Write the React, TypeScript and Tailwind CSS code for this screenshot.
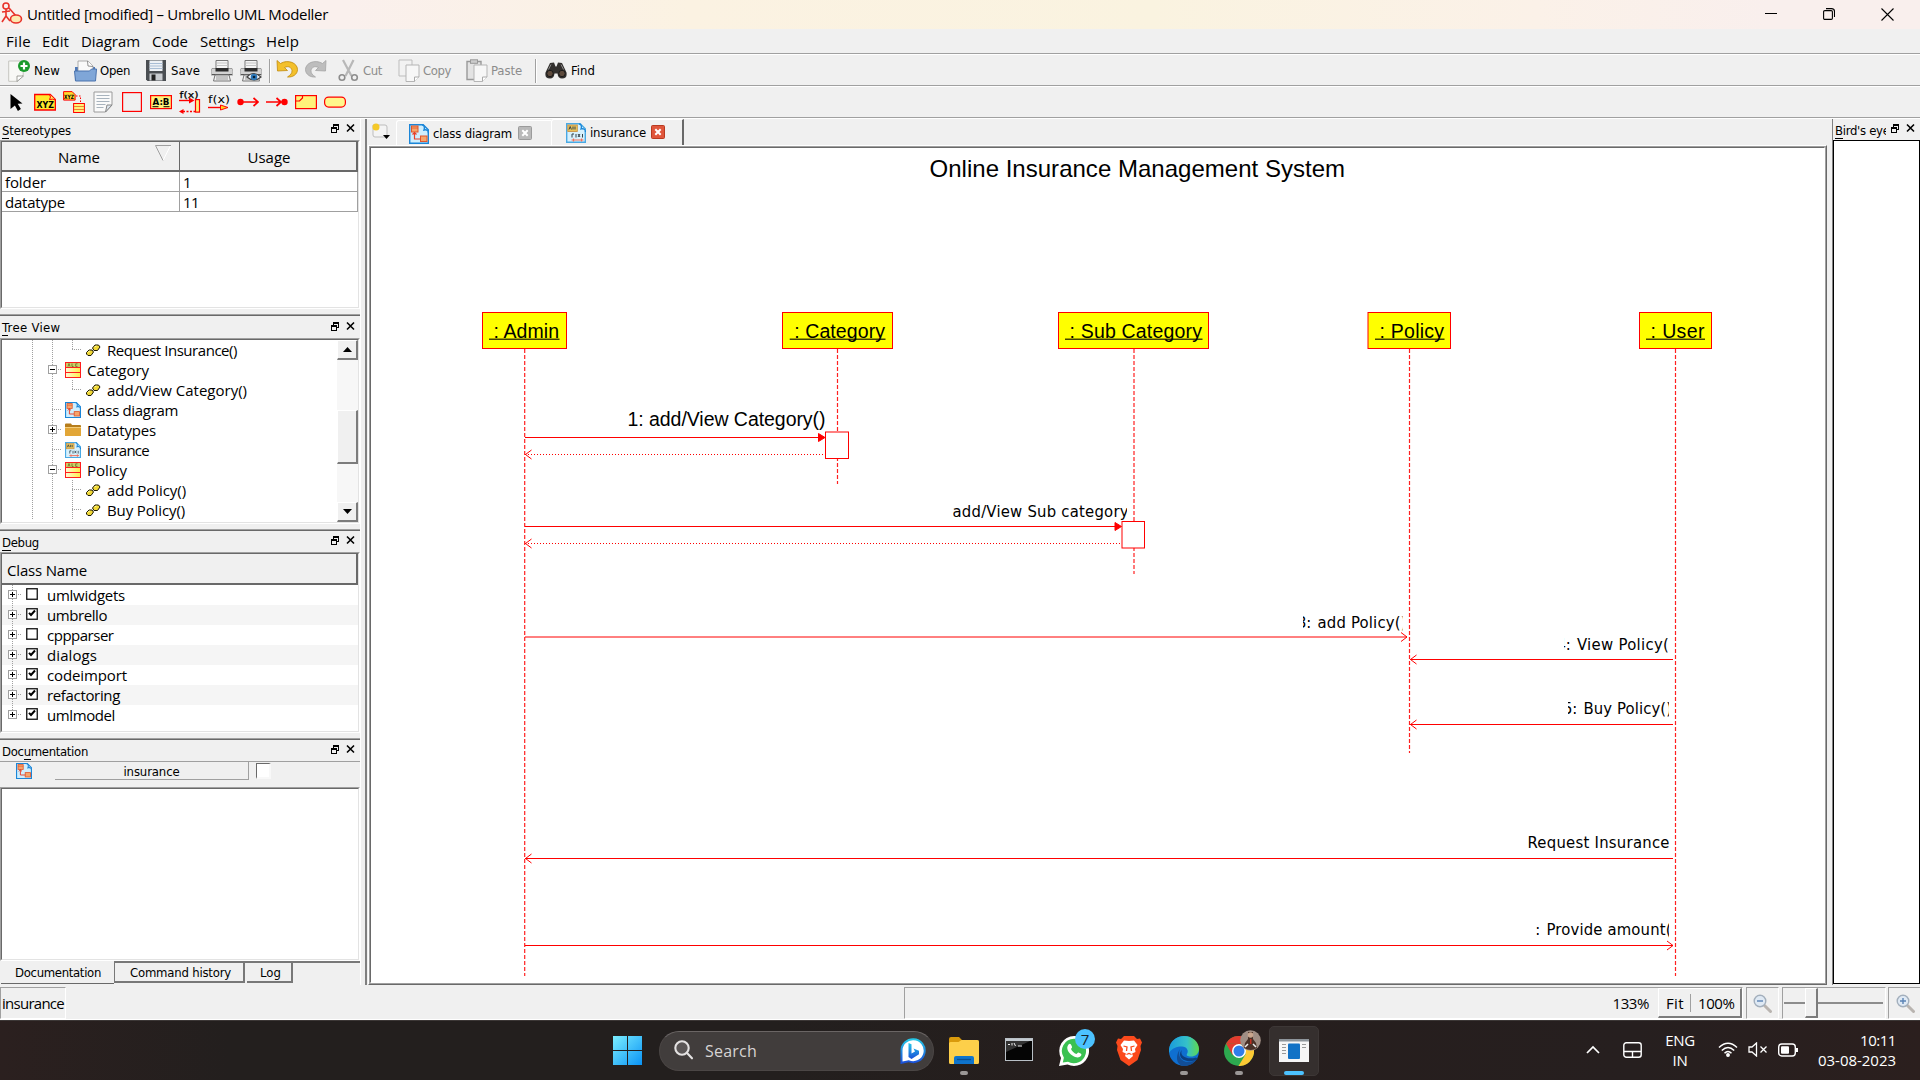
import React, { useLayoutEffect, useRef, useState } from 'react';

/* Text run whose letter spacing is adjusted so that it fills a given advance width. */
function T({ w, children, className = '' }: { w: number; children: string; className?: string }) {
  const ref = useRef<HTMLSpanElement>(null);
  const [ls, setLs] = useState(0);
  useLayoutEffect(() => {
    if (ref.current) setLs((w - ref.current.getBoundingClientRect().width) / children.length);
  }, [w, children]);
  return (
    <span className={'inline-block shrink-0 whitespace-pre ' + className} style={{ width: w }}>
      <span ref={ref} style={{ letterSpacing: ls }}>{children}</span>
    </span>
  );
}

const SEGOE = "font-['Open_Sans','Noto_Sans',sans-serif] text-[15px] leading-[20px]";
const TAHOMA = "font-['DejaVu_Sans_Condensed','DejaVu_Sans',sans-serif] text-[13px] leading-[16px]";

function Sunken({ className = '', inner = '', children }: { className?: string; inner?: string; children?: React.ReactNode }) {
  return (
    <div className={'border border-t-[#a0a0a0] border-l-[#a0a0a0] border-r-white border-b-white ' + className}>
      <div className={'h-full w-full overflow-hidden border border-t-[#696969] border-l-[#696969] border-r-[#e3e3e3] border-b-[#e3e3e3] bg-white ' + inner}>
        {children}
      </div>
    </div>
  );
}

/* ---------- dock title ---------- */
function DockButtons() {
  return (
    <svg width="27" height="12" viewBox="0 0 27 12" fill="none" stroke="#000" className="mb-[3px] shrink-0" shapeRendering="crispEdges">
      <path d="M3 1h6M3 2h6M3 1v3M8.5 1v5M6 6h3" />
      <path d="M1 4.5h6M1 5h6M1.5 4v6M6.5 4v6M1 9.5h6" />
      <path d="M17 1.5l7 7M24 1.5l-7 7" strokeWidth="1.6" shapeRendering="auto" />
    </svg>
  );
}
function DockTitle({ pre = '', u, post, w, className = '' }: { pre?: string; u: string; post: string; w: number; className?: string }) {
  const ref = useRef<HTMLSpanElement>(null);
  const [ls, setLs] = useState(0);
  const n = pre.length + u.length + post.length;
  useLayoutEffect(() => {
    if (ref.current) setLs((w - ref.current.getBoundingClientRect().width) / n);
  }, [w, n]);
  return (
    <div className={'flex items-center justify-between pl-[2px] pr-[3px] pt-[2px] ' + TAHOMA + ' ' + className}>
      <span ref={ref} className="whitespace-pre" style={{ letterSpacing: ls }}>
        {pre}<span className="border-b border-black">{u}</span>{post}
      </span>
      <DockButtons />
    </div>
  );
}

/* ---------- small document icons ---------- */
function ClassDiagramIcon({ s = 16 }: { s?: number }) {
  return (
    <svg width={s} height={s} viewBox="0 0 20 20" className="shrink-0">
      <path d="M.7.7h13.5l5.1 5.1v13.5H.7z" fill="#cfeefd" stroke="#1b86d8" strokeWidth="1.4" />
      <path d="M13 1c2 0 3 2 2 5 3-1 4.500 1 4.500 3" fill="#fff" stroke="#1b86d8" strokeWidth="1.400" />
      <rect x="2.500" y="2" width="6.500" height="6" fill="#f6a56b" stroke="#e2562b" />
      <path d="M2.500 4h6.500M11.500 14h6" stroke="#e2562b" strokeWidth=".8" />
      <rect x="11.500" y="12" width="6.500" height="5.500" fill="#f6a56b" stroke="#e2562b" />
      <path d="M5.500 8v7h6M3.500 10.500l2-2 2 2" fill="none" stroke="#e8402a" strokeWidth="1.200" />
    </svg>
  );
}
function SequenceIcon({ s = 16 }: { s?: number }) {
  return (
    <svg width={s} height={s} viewBox="0 0 20 20" className="shrink-0">
      <path d="M.7.7h13.500l5.100 5.100v13.500H.7z" fill="#d7f1fd" stroke="#49a9e4" strokeWidth="1.400" />
      <path d="M13 1c2 0 3 2 2 5 3-1 4.500 1 4.500 3" fill="#fff" stroke="#1b86d8" strokeWidth="1.300" />
      <rect x="1.800" y="2" width="9.500" height="6.500" fill="#e8c25a" stroke="#c98b3a" strokeWidth=".8" />
      <path d="M3 6.500l1.200-3 1.200 3M7 3.500v3M9 3.500v3" fill="none" stroke="#33424a" />
      <path d="M6 11h2M6 11v3.500M10 11v3.500M12 11l2 3M14 11l-2 3M16.500 11v3.500" stroke="#33424a" fill="none" />
      <path d="M5.500 17h12M7.500 15.500v3M15.500 15.500v3" stroke="#f0705a" fill="none" strokeWidth="1.200" />
    </svg>
  );
}
function ClassIcon() {
  return (
    <svg width="16" height="16" viewBox="0 0 16 16" className="shrink-0">
      <defs><linearGradient id="cls" x1="0" x2="1"><stop offset="0" stopColor="#fff9d6" /><stop offset="1" stopColor="#ffee4a" /></linearGradient></defs>
      <rect x=".5" y=".5" width="15" height="15" fill="url(#cls)" stroke="#ff1d1d" />
      <rect x="1" y="1" width="14" height="4" fill="#c9cf6a" />
      <path d="M3 4.500l1-3 1 3M7 1.500v3h1.500M12.500 1.800h-1.800v2.600h1.800" stroke="#6a6a20" strokeWidth=".8" fill="none" />
      <path d="M0 5.500h16M0 10.500h16" stroke="#ff1d1d" />
    </svg>
  );
}
function OperationIcon() {
  return (
    <svg width="16" height="16" viewBox="0 0 16 16" className="shrink-0">
      <path d="M1.500 10.500l2.500-2.500h3l1.500 2-2.500 3.500H3L1.500 12zM7.500 6l2.500-3h3.500L15 5l-2.500 3.500h-3.500z" fill="#f2d936" stroke="#1a1600" strokeWidth="1" />
      <path d="M3 10l2-1M9.500 5l2-1" stroke="#fff8a0" />
    </svg>
  );
}
function FolderIcon() {
  return (
    <svg width="16" height="16" viewBox="0 0 16 16" className="shrink-0">
      <path d="M0 2.500q0-1 1-1h5l1 1.500h8q1 0 1 1V13q0 1-1 1H1q-1 0-1-1z" fill="#b67d1c" />
      <path d="M0 5.500h16V13q0 1-1 1H1q-1 0-1-1z" fill="#e2a637" />
      <path d="M0 5.500h16" stroke="#f4cd7a" />
    </svg>
  );
}

/* ---------- tree cells ---------- */
type Cell = '|' | 'L' | 'T' | '-' | '+' | ' ';
function Guide({ k, last = false }: { k: Cell; last?: boolean }) {
  const box = k === '-' || k === '+';
  return (
    <svg width="20" height="20" viewBox="0 0 20 20" className="shrink-0" shapeRendering="crispEdges" fill="none">
      {k !== ' ' && <path d={k === 'L' || last ? 'M10.500 0v10' : 'M10.500 0v20'} stroke="#a0a0a0" strokeDasharray="1 1" />}
      {k !== '|' && k !== ' ' && <path d={box ? 'M14 9.500h6' : 'M10 9.500h10'} stroke="#a0a0a0" strokeDasharray="1 1" />}
      {box && <rect x="6.500" y="5.500" width="8" height="8" fill="#fff" stroke="#a0a0a0" />}
      {box && <path d="M8 9.500h5" stroke="#000" />}
      {k === '+' && <path d="M10.500 7v5" stroke="#000" />}
    </svg>
  );
}
const tree: { cells: Cell[]; icon: 'op' | 'cls' | 'cd' | 'sd' | 'dir'; label: string; w: number }[] = [
  { cells: ['|', '|', 'L'], icon: 'op', label: 'Request Insurance()', w: 130 },
  { cells: ['|', '-'], icon: 'cls', label: 'Category', w: 62 },
  { cells: ['|', '|', 'L'], icon: 'op', label: 'add/View Category()', w: 140 },
  { cells: ['|', 'T'], icon: 'cd', label: 'class diagram', w: 91 },
  { cells: ['|', '+'], icon: 'dir', label: 'Datatypes', w: 69 },
  { cells: ['|', 'T'], icon: 'sd', label: 'insurance', w: 62 },
  { cells: ['|', '-'], icon: 'cls', label: 'Policy', w: 40 },
  { cells: ['|', '|', 'T'], icon: 'op', label: 'add Policy()', w: 79 },
  { cells: ['|', '|', 'T'], icon: 'op', label: 'Buy Policy()', w: 78 },
];
const debugRows: [string, boolean, number][] = [
  ['umlwidgets', false, 78], ['umbrello', true, 60], ['cppparser', false, 66.5], ['dialogs', true, 50],
  ['codeimport', true, 80], ['refactoring', true, 73], ['umlmodel', true, 68],
];

function ScrollButton({ up }: { up?: boolean }) {
  return (
    <div className="flex h-[20px] w-[21px] items-center justify-center border-r-2 border-b-2 border-t border-l border-r-[#7c7c7c] border-b-[#7c7c7c] border-t-white border-l-white bg-[#f0f0f0]">
      <svg width="9" height="5" viewBox="0 0 9 5"><path d={up ? 'M0 5L4.500 0 9 5z' : 'M0 0h9L4.500 5z'} fill="#000" /></svg>
    </div>
  );
}

function LeftDocks() {
  return (
    <div className="flex w-[361px] shrink-0 flex-col border-r border-white [&>*]:shrink-0">
      <DockTitle u="S" post="tereotypes" w={69} className="h-[21px]" />
      <Sunken className="h-[169px] w-[360px]">
        <div className="flex h-[30px] bg-[#f0f0f0]">
          <div className="flex w-[178px] items-center border-r border-b-2 border-[#696969] pl-[56px] pt-[2px]">
            <T w={42} className={SEGOE}>Name</T>
            <svg width="16" height="16" viewBox="0 0 16 16" className="mb-[8px] ml-[55px]" fill="none"><path d="M15.500.5L8 15.500" stroke="#fff" /><path d="M16 .5H.5L8 15.500" stroke="#a0a0a0" /></svg>
          </div>
          <div className="flex flex-1 items-center justify-center border-r-2 border-b-2 border-[#696969] pl-[2px] pt-[2px]"><T w={43} className={SEGOE}>Usage</T></div>
        </div>
        {([['folder', '1', 41, 8], ['datatype', '11', 60, 16]] as [string, string, number, number][]).map(([a, b, w, w2]) => (
          <div key={a} className="flex h-[20px] border-b border-[#a0a0a0]">
            <div className="flex w-[178px] items-center border-r border-[#a0a0a0] pl-[3px]"><T w={w} className={SEGOE}>{a}</T></div>
            <div className="flex flex-1 items-center border-r border-[#a0a0a0] pl-[3px]"><T w={w2} className={SEGOE}>{b}</T></div>
          </div>
        ))}
      </Sunken>
      <div className="mt-[5px] h-[2px] border-t border-b border-t-[#a0a0a0] border-b-[#696969]" />
      <DockTitle u="T" post="ree View" w={58.5} className="h-[22px]" />
      <Sunken className="h-[186px] w-[360px]" inner="flex">
        <div className="flex-1 pl-[20px]">
          {tree.map((r) => (
            <div key={r.label} className="flex h-[20px] items-center">
              {r.cells.map((c, i) => <Guide key={i} k={c} />)}
              <span className="ml-[3px] mr-[6px] flex">
                {r.icon === 'op' ? <OperationIcon /> : r.icon === 'cls' ? <ClassIcon /> : r.icon === 'cd' ? <ClassDiagramIcon /> : r.icon === 'sd' ? <SequenceIcon /> : <FolderIcon />}
              </span>
              <T w={r.w} className={SEGOE}>{r.label}</T>
            </div>
          ))}
        </div>
        <div className="flex w-[21px] flex-col bg-[#f7f7f7]">
          <ScrollButton up />
          <div className="mt-[50px] h-[54px] w-[21px] border-r-2 border-b-2 border-t border-l border-r-[#7c7c7c] border-b-[#7c7c7c] border-t-white border-l-white bg-[#f0f0f0]" />
          <div className="flex-1" />
          <ScrollButton />
        </div>
      </Sunken>
      <div className="mt-[5px] h-[2px] border-t border-b border-t-[#a0a0a0] border-b-[#696969]" />
      <DockTitle u="D" post="ebug" w={37} className="h-[21px]" />
      <Sunken className="h-[181px] w-[360px]">
        <div className="flex h-[31px] items-center border-r-2 border-b-2 border-[#696969] bg-[#f0f0f0] pl-[5px] pt-[2px]"><T w={80} className={SEGOE}>Class Name</T></div>
        {debugRows.map(([n, on, w], i) => (
          <div key={n} className={'flex h-[20px] items-center ' + (i % 2 ? 'bg-[#f5f5f5]' : 'bg-white')}>
            <Guide k="+" last={i === 6} />
            <svg width="12" height="12" viewBox="0 0 12 12" className="mb-[3px] ml-[4px] mr-[9px] shrink-0">
              <rect x=".75" y=".75" width="10.500" height="10.500" fill="#fff" stroke="#111" strokeWidth="1.300" />
              {on && <path d="M3 4.800l2 2.200 4-4.500" stroke="#000" strokeWidth="2" fill="none" />}
            </svg>
            <T w={w} className={SEGOE}>{n}</T>
          </div>
        ))}
      </Sunken>
      <div className="mt-[5px] h-[2px] border-t border-b border-t-[#a0a0a0] border-b-[#696969]" />
      <DockTitle pre="Doc" u="u" post="mentation" w={86} className="h-[21px]" />
      <div className="flex h-[26px] items-start border-t border-[#a0a0a0]">
        <span className="ml-[16px] mt-[1px]"><ClassDiagramIcon /></span>
        <div className={'ml-[23px] flex h-[18px] w-[194px] items-center justify-center border-r border-b border-[#a0a0a0] pt-[2px] ' + TAHOMA}><T w={56}>insurance</T></div>
        <div className="ml-[7px] mt-[1px] h-[16px] w-[15px] border-t border-l border-r-2 border-b-2 border-t-[#696969] border-l-[#696969] border-r-[#f8f8f8] border-b-[#f8f8f8] bg-white" />
      </div>
      <Sunken className="h-[174px] w-[360px]" />
      <div className={'flex h-[24px] items-start ' + TAHOMA}>
        <div className="ml-px flex h-[23px] w-[113px] items-center border-b border-[#696969] pl-[14px] pt-[2px]"><T w={86}>Documentation</T></div>
        <div className="flex h-[22px] flex-1 border-t-2 border-[#787878]">
          <div className="flex w-[131px] items-center border-l border-r-2 border-b-2 border-[#787878] pl-[15px] pt-[1px]"><T w={101}>Command history</T></div>
          <div className="ml-[2px] flex w-[46px] items-center border-r-2 border-b-2 border-[#787878] pl-[13px] pt-[1px]"><T w={21}>Log</T></div>
        </div>
      </div>
    </div>
  );
}

/* ---------- sequence diagram ---------- */
const RED = '#ff0000';
const ARIAL = '"Liberation Sans",Arial,sans-serif';
const TAH = '"DejaVu Sans Condensed","DejaVu Sans",sans-serif';
const objects = [
  { t: ': Admin', x: 482.5, r: 566.5, u: 489, e: 559.5, life: 524.7, end: 976 },
  { t: ': Category', x: 782.5, r: 892.5, u: 789.7, e: 885.5, life: 837.5, end: 484 },
  { t: ': Sub Category', x: 1058.5, r: 1208.5, u: 1065, e: 1202.5, life: 1134, end: 574 },
  { t: ': Policy', x: 1368, r: 1450.5, u: 1375, e: 1444.5, life: 1409.5, end: 753 },
  { t: ': User', x: 1639.5, r: 1711.5, u: 1646, e: 1705, life: 1675.5, end: 976 },
];
function Open({ x, y, dir }: { x: number; y: number; dir: 1 | -1 }) {
  return <path d={`M${x - 6 * dir} ${y - 4.5}L${x} ${y}L${x - 6 * dir} ${y + 4.5}`} stroke={RED} fill="none" />;
}
function Msg({ n, t, x, len, y, l = x, r = x + len }: { n?: string; t: string; x: number; len: number; y: number; l?: number; r?: number }) {
  return (
    <svg x={l} y={y - 20} width={r - l} height={28} overflow="hidden" fontSize="16.500" fontFamily={TAH}>
      {n && <text x={x - l - 20.6} y={20}>{n}</text>}
      <text x={x - l} y={20} textLength={len} lengthAdjust="spacing">{t}</text>
    </svg>
  );
}
function Diagram() {
  return (
    <svg width="1453" height="833" viewBox="371 148 1453 833" className="block">
      <text x="929.500" y="177" fontSize="24" fontFamily={ARIAL} textLength="415.500" lengthAdjust="spacing">Online Insurance Management System</text>
      {objects.map((o) => (
        <g key={o.t}>
          <path d={`M${o.life} 349V${o.end}`} stroke="#ff2020" strokeDasharray="4 2" strokeWidth="1.200" />
          <rect x={o.x} y="312.500" width={o.r - o.x} height="36" fill="#ffff00" stroke={RED} />
          <path d={`M${o.u} 339.300H${o.e}`} stroke="#444400" strokeWidth="1.600" />
          <text x={o.u + 4.5} y="337.500" fontSize="19.500" fontFamily={ARIAL} textLength={o.e - o.u - 5} lengthAdjust="spacing">{o.t}</text>
        </g>
      ))}
      <g stroke={RED} fill="none">
        <path d="M525 437.500H820M525 526.500H1117" />
        <path d="M525 454.500H825M525 543.500H1121" strokeDasharray="1 2" strokeWidth="1.200" />
        <path d="M818.500 433.500v8l6.500-4zM1115 522.500v8l6.500-4z" fill={RED} />
        <rect x="825.500" y="432" width="23" height="26.500" fill="#fff" />
        <rect x="1122" y="521.500" width="22.500" height="26.500" fill="#fff" />
        <path d="M525 637H1407M1673 659.500H1410M1673 724.500H1410M1673 858.500H525M525 945.500H1673" />
      </g>
      <Open x={525.5} y={454.5} dir={-1} />
      <Open x={525.5} y={543.5} dir={-1} />
      <Open x={1407} y={637} dir={1} />
      <Open x={1410.5} y={659.5} dir={-1} />
      <Open x={1410.5} y={724.5} dir={-1} />
      <Open x={525.5} y={858.5} dir={-1} />
      <Open x={1673} y={945.5} dir={1} />
      <text x="627.500" y="425.500" fontSize="19.500" fontFamily={ARIAL} textLength="198" lengthAdjust="spacing">1: add/View Category()</text>
      <Msg t="add/View Sub category" x={952.5} len={176} y={517} r={1127} />
      <Msg n="3:" t="add Policy()" x={1317.5} len={89} y={628} l={1303} r={1402.5} />
      <Msg n="4:" t="View Policy()" x={1577} len={98} y={650} l={1564} r={1668} />
      <Msg n="5:" t="Buy Policy()" x={1583.5} len={88.5} y={714} l={1568} r={1669} />
      <Msg t="Request Insurance" x={1527.5} len={142} y={848} r={1671} />
      <Msg n="7:" t="Provide amount()" x={1546.5} len={131} y={935} l={1535} r={1669} />
    </svg>
  );
}

/* ---------- toolbar icons ---------- */
function NewIcon() {
  return (
    <svg width="22" height="22" viewBox="0 0 22 22" className="shrink-0">
      <path d="M.7 1h14.500v14l-6 6.300H.7z" fill="#f8f8f6" stroke="#c5c5c0" />
      <path d="M9 21.500v-5.500h6.500z" fill="#fff" stroke="#8a8a85" strokeWidth=".8" />
      <circle cx="16" cy="6" r="6" fill="#1a9a2c" />
      <path d="M16 2.500v7M12.500 6h7" stroke="#fff" strokeWidth="2.200" />
    </svg>
  );
}
function OpenIcon() {
  return (
    <svg width="23" height="22" viewBox="0 0 23 22" className="shrink-0">
      <path d="M1 7h20v13H1z" fill="#4d78b8" />
      <path d="M4 10V1h10l5 5v8H4z" fill="#fafafa" stroke="#9a9a9a" strokeWidth=".8" />
      <path d="M13.500 1l.5 5 5 .5" fill="#fff" stroke="#777" strokeWidth=".8" />
      <path d="M.5 11h15l2-2h5l-1 12H1.500z" fill="#7fa6d8" stroke="#4a72ad" />
    </svg>
  );
}
function SaveIcon() {
  return (
    <svg width="20" height="21" viewBox="0 0 20 21" className="shrink-0">
      <path d="M0 0h20v21H1.500L0 19.500z" fill="#4a4e52" />
      <rect x="3.500" y=".5" width="13" height="10.500" fill="#eef1f5" />
      <path d="M3.500 3.500h13M3.500 6h13M3.500 8.500h13" stroke="#a9bdd4" />
      <rect x="3.500" y="13.500" width="13" height="7" fill="#c9ccd0" /><rect x="5.500" y="14.500" width="4" height="6" fill="#222" />
    </svg>
  );
}
function PrintIcon({ preview }: { preview?: boolean }) {
  return (
    <svg width="22" height="22" viewBox="0 0 22 22" className="shrink-0">
      <path d="M5 .5h12v9H5z" fill="#f4f4f4" stroke="#777" />
      <path d="M5.500 3h11M5.500 5.500h11" stroke="#c4c4c4" />
      <path d="M1 8.500h20q1 1 1 3v3.500H0v-3.500q0-2 1-3z" fill="#d2d2d2" stroke="#8c8c8c" strokeWidth=".8" />
      <path d="M4.500 8h13v3.500h-13z" fill="#2b2b2b" /><path d="M1 14.500h20" stroke="#555" />
      <path d="M4 15h14l1.500 6h-17z" fill="#eee" stroke="#777" /><path d="M5 17h12M5 19h12" stroke="#999" />
      {preview && <><path d="M7 17q6-7 14 0-7 6-14 0z" fill="#f5f9ff" stroke="#444" strokeWidth="1.200" /><circle cx="14" cy="17" r="3.300" fill="#2d78b8" /><circle cx="14" cy="17" r="1.300" fill="#0a1f33" /></>}
    </svg>
  );
}
function UndoIcon({ redo }: { redo?: boolean }) {
  return (
    <svg width="22" height="20" viewBox="0 0 22 20" className={redo ? 'mb-[4px] shrink-0 -scale-x-100' : 'mb-[4px] shrink-0'}>
      <path d="M1 1.500L1.500 12l10-.5L8.500 8.500c4-2 7 0 7.500 3 .3 2.500-1.500 4.500-4.500 6.500 5 .5 10-2.500 10-7.500C21.500 4 12 0 4.500 4.500z" fill={redo ? '#bdbdbd' : '#f3c02c'} stroke={redo ? '#a5a5a5' : '#c08a10'} strokeWidth=".8" />
    </svg>
  );
}
function CutIcon() {
  return (
    <svg width="21" height="23" viewBox="0 0 21 23" fill="none" className="shrink-0">
      <path d="M5 1l8.500 16M15.500 1L7.500 17" stroke="#b8b8b8" strokeWidth="2.200" />
      <circle cx="4" cy="18.500" r="2.800" stroke="#8d8d8d" strokeWidth="1.600" /><circle cx="16.500" cy="18.500" r="2.800" stroke="#8d8d8d" strokeWidth="1.600" />
    </svg>
  );
}
function CopyIcon({ paste }: { paste?: boolean }) {
  return (
    <svg width="22" height="23" viewBox="0 0 22 23" className="shrink-0">
      {paste ? <><path d="M1 2.500h14v18H1z" fill="#e3e3e3" stroke="#999" strokeWidth="1.400" /><rect x="4.500" y=".8" width="7" height="3.500" fill="#ccc" stroke="#999" /></> : <path d="M1 1h13v16H1z" fill="#f2f2f2" stroke="#bdbdbd" />}
      <path d="M8 6h13v12l-4.500 4.500H8z" fill="#f7f7f7" stroke="#b5b5b5" />
      <path d="M16.500 22.500V18H21" fill="#fff" stroke="#aaa" />
    </svg>
  );
}
function FindIcon() {
  return (
    <svg width="22" height="17" viewBox="0 0 22 17" className="shrink-0">
      <path d="M5 1l4-.5 1.500 4h1L13 .5l4 .5 4.500 9.500q1 6-4.500 6-4 0-4.500-5h-3Q9 16.500 5 16.500q-5.500 0-4.500-6z" fill="#33302e" />
      <circle cx="5" cy="11.500" r="3.200" fill="#5d4a3c" stroke="#1a1a1a" /><circle cx="17" cy="11.500" r="3.200" fill="#5d4a3c" stroke="#1a1a1a" />
      <path d="M6 2.500l-2.500 5M16 2.500l2.500 5" stroke="#8b8b8b" />
    </svg>
  );
}
function Sep() {
  return <span className="h-[24px] w-[2px] shrink-0 border-l border-r border-l-[#a0a0a0] border-r-white" />;
}

const mono = '"DejaVu Sans",sans-serif';
const tools: React.ReactNode[] = [
  <svg key="a" width="22" height="22" viewBox="0 0 22 22"><path d="M5.500 3l12 9.500-4.800.3 3.200 5.200-3 2-3-5.500-4.400 3.500z" fill="#000" /></svg>,
  <svg key="b" width="22" height="22" viewBox="0 0 22 22"><path d="M.7 3.500h15.500l5.200 5V19H.7z" fill="#ffe92e" stroke="#f00" strokeWidth="1.300" /><path d="M15.500 3.500q2 2.500 0 5 3.500-1 6 .5" fill="#fff36b" stroke="#f00" /><text x="2.500" y="17" fontSize="9" fontWeight="bold" fontFamily={mono} textLength="17.500" lengthAdjust="spacingAndGlyphs">XYZ</text></svg>,
  <svg key="c" width="22" height="22" viewBox="0 0 22 22"><path d="M.6.6h8.500l3 3v5.500H.6z" fill="#ffd92e" stroke="#f00" /><text x="1" y="8" fontSize="6" fontWeight="bold" fontFamily={mono} textLength="10" lengthAdjust="spacingAndGlyphs">XYZ</text><path d="M13 5h4.500v7" stroke="#f00" strokeDasharray="1.500 1.500" fill="none" /><rect x="10.600" y="12.500" width="10.800" height="9" fill="#fff27a" stroke="#f00" /><path d="M11 15.500h10M11 18.500h10" stroke="#f08030" /></svg>,
  <svg key="d" width="22" height="22" viewBox="0 0 22 22"><path d="M2 1h18v13l-6.500 7H2z" fill="#fafafa" stroke="#9a9a9a" /><path d="M4.500 4.500h13M4.500 7.500h13M4.500 10.500h13M4.500 13.500h9M4.500 16.500h7" stroke="#a8b3bd" /><path d="M20 14h-5l-1.500 7z" fill="#dde6ee" stroke="#888" /></svg>,
  <svg key="e" width="22" height="22" viewBox="0 0 22 22"><rect x="1.600" y="1.600" width="18.800" height="18.800" fill="none" stroke="#f00" strokeWidth="1.200" /></svg>,
  <svg key="f" width="22" height="22" viewBox="0 0 22 22"><rect x=".6" y="4.600" width="20.800" height="13" fill="#fff27a" stroke="#f00" strokeWidth="1.200" /><text x="2.500" y="14" fontSize="9" fontWeight="bold" fontFamily={mono} textLength="17" lengthAdjust="spacingAndGlyphs">A:B</text><path d="M2.500 15.700h6M13.500 15.700h6" stroke="#000" /></svg>,
  <svg key="g" width="24" height="24" viewBox="0 0 24 24"><text x="1.500" y="7.500" fontSize="8.500" fontFamily={mono} stroke="#000" strokeWidth=".25" textLength="19" lengthAdjust="spacingAndGlyphs">f(x)</text><path d="M1 10.500h12" stroke="#f00" strokeWidth="1.400" /><path d="M11 7.500l5.500 3-5.500 3z" fill="#f00" /><rect x="17.500" y="9.600" width="4" height="12.500" fill="#fff27a" stroke="#f00" strokeWidth="1.200" /><path d="M5 21.500h12" stroke="#f00" strokeDasharray="2 1.500" strokeWidth="1.400" /><path d="M5.500 19L1 21.500l4.500 2.500z" fill="#f00" /></svg>,
  <svg key="h" width="24" height="22" viewBox="0 0 24 22"><text x="1" y="11.500" fontSize="11" fontFamily={mono} textLength="22" lengthAdjust="spacingAndGlyphs">f(x)</text><path d="M1 16.500h14" stroke="#f00" strokeWidth="1.400" /><path d="M13.500 14l7.500 2.500-7.500 2.500z" fill="#ffd21e" stroke="#f00" /></svg>,
  <svg key="i" width="22" height="22" viewBox="0 0 22 22"><circle cx="3.500" cy="11" r="3.200" fill="#f00" /><path d="M5 11h16M16.500 7l4.500 4-4.500 4" stroke="#f00" strokeWidth="1.700" fill="none" /></svg>,
  <svg key="j" width="22" height="22" viewBox="0 0 22 22"><circle cx="18.500" cy="11" r="3.200" fill="#f00" /><path d="M0 11h16M10.500 7l4.500 4-4.500 4" stroke="#f00" strokeWidth="1.700" fill="none" /></svg>,
  <svg key="k" width="22" height="22" viewBox="0 0 22 22"><rect x=".6" y="4.600" width="20.800" height="13" fill="#fff27a" stroke="#f00" strokeWidth="1.200" /><path d="M1 10h3.500L7.500 7V5" stroke="#f00" strokeWidth="1.200" fill="none" /></svg>,
  <svg key="l" width="22" height="22" viewBox="0 0 22 22"><rect x=".6" y="6.100" width="20.800" height="10" rx="4" fill="#fff78c" stroke="#f00" strokeWidth="1.200" /></svg>,
];

function CloseBox({ red }: { red?: boolean }) {
  return (
    <svg width="14" height="14" viewBox="0 0 14 14" className="mb-px shrink-0">
      <rect x=".5" y=".5" width="13" height="13" rx="1" fill={red ? '#e0563b' : '#b9b9b9'} stroke={red ? '#b83a20' : '#9b9b9b'} />
      <path d="M4.300 4.300l5.400 5.400M9.700 4.300l-5.400 5.400" stroke="#fff" strokeWidth="2" />
    </svg>
  );
}

function ZoomIcon({ plus }: { plus?: boolean }) {
  return (
    <svg width="19" height="19" viewBox="0 0 19 19" className="shrink-0" fill="none">
      <path d="M11.500 11.500l6 6" stroke="#b9b4b0" strokeWidth="3" strokeLinecap="round" />
      <circle cx="7" cy="7" r="5.800" fill="#dfe9f4" stroke="#a3afbc" strokeWidth="1.400" />
      <path d={plus ? 'M4 7h6M7 4v6' : 'M4 7h6'} stroke="#5b83b4" strokeWidth="1.400" />
    </svg>
  );
}

/* ---------- taskbar ---------- */
function Slot({ children, dot, active }: { children: React.ReactNode; dot?: boolean; active?: boolean }) {
  return (
    <div className={'relative flex h-[50px] w-[50px] shrink-0 items-center justify-center rounded-[5px] border ' + (active ? 'border-[#3d3736] bg-[#352f2e]' : 'border-transparent')}>
      {children}
      {dot && <span className="absolute bottom-0 left-[20px] h-[4px] w-[8px] rounded-full bg-[#9b9796]" />}
      {active && <span className="absolute bottom-0 left-[14px] h-[4px] w-[20px] rounded-full bg-[#4cc2ff]" />}
    </div>
  );
}

export default function App() {
  return (
    <div className="flex h-[1080px] w-[1920px] flex-col overflow-hidden bg-[#f0f0f0] text-black">
      {/* title bar */}
      <div className="flex h-[29px] shrink-0 items-center bg-[linear-gradient(90deg,#faf0ed_0%,#faf0ed_18%,#fbf2e2_36%,#faf3e0_60%,#fbf1e8_80%,#f9efed_92%)] pb-[1px]">
        <svg width="22" height="24" viewBox="0 0 22 24" className="ml-px shrink-0" fill="none" stroke="#e8322a" strokeWidth="1.600">
          <circle cx="5" cy="4" r="3" /><path d="M5 7v7M1 10l8-1M5 14l-4 6M5 14l4 5M8 6l7 8" /><ellipse cx="15" cy="17" rx="5.500" ry="4" fill="#fde9b0" />
        </svg>
        <T w={301} className={SEGOE + ' mb-[1px] ml-[4px]'}>Untitled [modified] – Umbrello UML Modeller</T>
        <div className="ml-auto flex items-center gap-[46px] pr-[26px]">
          <svg width="12" height="12" viewBox="0 0 12 12"><path d="M0 5.500h12" stroke="#000" /></svg>
          <svg width="12" height="12" viewBox="0 0 12 12" fill="none" stroke="#000" strokeWidth="1.100"><rect x=".6" y="2.600" width="8.800" height="8.800" rx="1.200" /><path d="M3 .6h5.500q3 0 3 3V9" /></svg>
          <svg width="13" height="13" viewBox="0 0 13 13" stroke="#000" strokeWidth="1.100"><path d="M.5.5l12 12M12.500.5l-12 12" /></svg>
        </div>
      </div>
      {/* menu bar */}
      <div className={'flex h-[26px] shrink-0 items-center border-b border-white pb-[2px] pl-[6px] shadow-[inset_0_-1px_0_#a0a0a0] ' + SEGOE}>
        <T w={25}>File</T><T w={27} className="ml-[11px]">Edit</T><T w={59} className="ml-[12px]">Diagram</T>
        <T w={36} className="ml-[12px]">Code</T><T w={55} className="ml-[12px]">Settings</T><T w={33} className="ml-[11px]">Help</T>
      </div>
      {/* main toolbar */}
      <div className={'flex h-[32px] shrink-0 items-center border-b border-white shadow-[inset_0_-1px_0_#a0a0a0] ' + TAHOMA}>
        <span className="ml-[8px] flex w-[26px]"><NewIcon /></span><T w={26}>New</T>
        <span className="ml-[14px] flex w-[26px]"><OpenIcon /></span><T w={30}>Open</T>
        <span className="ml-[16px] flex w-[25px]"><SaveIcon /></span><T w={29}>Save</T>
        <span className="ml-[11px] flex w-[29px]"><PrintIcon /></span><span className="flex w-[29px]"><PrintIcon preview /></span>
        <Sep />
        <span className="ml-[5px] flex w-[29px]"><UndoIcon /></span><span className="flex w-[33px]"><UndoIcon redo /></span>
        <span className="flex w-[25px]"><CutIcon /></span><T w={19} className="text-[#8c8c8c]">Cut</T>
        <span className="ml-[16px] flex w-[25px]"><CopyIcon /></span><T w={28} className="text-[#8c8c8c]">Copy</T>
        <span className="ml-[15px] flex w-[25px]"><CopyIcon paste /></span><T w={31} className="text-[#8c8c8c]">Paste</T>
        <span className="ml-[13px] flex w-[10px]"><Sep /></span>
        <span className="flex w-[26px]"><FindIcon /></span><T w={24}>Find</T>
      </div>
      {/* drawing tools */}
      <div className="flex h-[31px] shrink-0 items-center border-b border-[#a0a0a0] pl-px">
        {tools.map((t, i) => <span key={i} className="flex w-[29px] justify-center">{t}</span>)}
      </div>
      {/* work area */}
      <div className="flex h-[867px] shrink-0 border-t border-white">
        <LeftDocks />
        <div className="ml-[4px] flex w-[1462px] flex-col border-l-2 border-[#808080]">
          <div className="flex h-[26px] items-end">
            <svg width="19" height="18" viewBox="0 0 19 18" className="mb-[5px] ml-[5px] mr-[5px]">
              <path d="M3 3h10q2 0 2 2v8q0 2-2 2H3q-2 0-2-2V3z" fill="#f4f4f4" stroke="#bdbdbd" /><circle cx="4" cy="5" r="3.500" fill="#f5c928" /><path d="M11 13h7l-3.500 4z" fill="#000" />
            </svg>
            <div className={'flex h-[25px] w-[155px] items-center rounded-tl-[3px] border-t border-l border-white pl-[12px] pt-[1px] ' + TAHOMA}>
              <ClassDiagramIcon s={20} /><T w={79} className="ml-[4px] mr-[6px]">class diagram</T><CloseBox />
            </div>
            <div className={'flex h-[26px] w-[133px] items-center rounded-tl-[3px] border-t border-l border-r-2 border-t-white border-l-white border-r-[#696969] pl-[14px] ' + TAHOMA}>
              <SequenceIcon s={20} /><T w={56} className="ml-[4px] mr-[5px]">insurance</T><CloseBox red />
            </div>
          </div>
          <div className="ml-px flex-1 border border-t-white border-l-white border-r-[#696969] border-b-[#696969]">
            <div className="h-full border border-[#a0a0a0]">
              <div className="h-full overflow-hidden border border-t-[#696969] border-l-[#696969] border-r-white border-b-white bg-white">
                <Diagram />
              </div>
            </div>
          </div>
        </div>
        <div className="ml-[5px] flex flex-1 flex-col border-l border-[#808080]">
          <div className={'flex h-[21px] items-center justify-between pl-[2px] pr-[3px] pt-[2px] ' + TAHOMA}>
            <span className="w-[51px] overflow-hidden whitespace-pre tracking-[-0.3px]"><span className="border-b border-black">B</span>ird's eye</span>
            <DockButtons />
          </div>
          <div className="mb-px flex-1 border border-black bg-white" />
        </div>
      </div>
      {/* status bar */}
      <div className={'flex h-[35px] shrink-0 items-start border-b border-white pt-[2px] ' + SEGOE}>
        <div className="flex h-[32px] w-[66px] items-center border border-t-[#a0a0a0] border-l-[#a0a0a0] border-r-white border-b-white pl-[1px]"><T w={62}>insurance</T></div>
        <div className="ml-[838px] flex h-[32px] w-[839px] items-center justify-end border border-t-[#a0a0a0] border-l-[#a0a0a0] border-r-white border-b-white">
          <T w={36.5} className="mr-[9px]">133%</T>
          <div className="flex h-[30px] w-[84px] items-center border-r-2 border-b-2 border-t border-l border-r-[#7c7c7c] border-b-[#7c7c7c] border-t-white border-l-white pl-[7px]">
            <T w={18}>Fit</T><span className="ml-[6px] mr-[7px] h-[18px] w-px bg-[#a0a0a0]" /><T w={36.5}>100%</T>
          </div>
        </div>
        <div className="ml-[3px] flex h-[32px] w-[33px] items-center justify-center border border-t-[#a0a0a0] border-l-[#a0a0a0] border-r-white border-b-white"><ZoomIcon /></div>
        <div className="ml-[3px] flex h-[32px] w-[104px] items-center border border-t-[#a0a0a0] border-l-[#a0a0a0] border-r-white border-b-white pl-[1px]">
          <span className="h-[2px] w-[21px] bg-[#8c8c8c]" />
          <span className="h-[30px] w-[13px] border-r-2 border-b-2 border-t border-l border-r-[#7c7c7c] border-b-[#7c7c7c] border-t-white border-l-white" />
          <span className="h-[2px] w-[65px] bg-[#8c8c8c]" />
        </div>
        <div className="ml-[2px] flex h-[32px] flex-1 items-center border border-t-[#a0a0a0] border-l-[#a0a0a0] border-r-0 border-b-white pl-[7px]"><ZoomIcon plus /></div>
      </div>
      {/* taskbar */}
      <div className="flex h-[60px] shrink-0 items-center border-t border-[#3c3736] bg-[linear-gradient(90deg,#2b201f_0%,#231f1e_12%,#231f1e_40%,#261e1d_60%,#261f1f_85%,#2b1f1e_100%)] pl-[613px] text-white">
        <svg width="29" height="29" viewBox="0 0 29 29" className="shrink-0">
          <defs><linearGradient id="win" x1="0" y1="0" x2="1" y2="1"><stop offset="0" stopColor="#7beeff" /><stop offset="1" stopColor="#0a93f5" /></linearGradient></defs>
          <path d="M0 0h14v14H0zM15 0h14v14H15zM0 15h14v14H0zM15 15h14v14H15z" fill="url(#win)" />
        </svg>
        <div className="ml-[17px] flex h-[40px] w-[275px] shrink-0 items-center rounded-full border border-[#4b4645] border-t-[#6a6564] bg-[#413d3c] pl-[14px]">
          <svg width="20" height="20" viewBox="0 0 20 20" fill="none" stroke="#e4e2e2" strokeWidth="2.100" className="mb-[1px]"><circle cx="8" cy="8" r="6.700" fill="#5a5656" /><path d="M12.800 12.800l5.200 5.500" strokeLinecap="round" /></svg>
          <T w={52} className={"ml-[11px] font-['Open_Sans','Noto_Sans',sans-serif] text-[16px] leading-[22px] text-[#d6d4d3]"}>Search</T>
          <svg width="26" height="26" viewBox="0 0 26 26" className="ml-[143px]">
            <defs><linearGradient id="bing" x1="0" y1="0" x2="0" y2="1"><stop offset="0" stopColor="#25c8e8" /><stop offset="1" stopColor="#1b50d8" /></linearGradient></defs>
            <path d="M13.500 1.200a11.500 11.500 0 1 1-5 22L1.500 24.800V12.500A11.500 11.500 0 0 1 13.500 1.200z" fill="#fff" stroke="url(#bing)" strokeWidth="2" />
            <path d="M8.500 5l3 1.200v9.300l3.500-2-1.500-3 5.500 2.300v3.500L11.500 21l-3-2z" fill="url(#bing)" />
          </svg>
        </div>
        <div className="ml-[5px] flex shrink-0 gap-[5px]">
          <Slot dot><svg width="30" height="27" viewBox="0 0 30 27"><path d="M0 2q0-2 2-2h8l3 3h15q2 0 2 2v5H0z" fill="#d99a0c" /><path d="M0 6.500Q0 5 1.500 5h8l3-2H28q2 0 2 2v20.500q0 1.500-1.500 1.500h-27Q0 27 0 25.500z" fill="#fdcf4a" /><path d="M5 21q0-2 2-2h16q2 0 2 2v6H5z" fill="#0f74cc" /><path d="M8 22.500h14" stroke="#0b4f91" strokeWidth="1.300" /></svg></Slot>
          <Slot><svg width="28" height="23" viewBox="0 0 28 23" className="mb-[2px]"><rect x=".5" y=".5" width="27" height="22" fill="#050505" stroke="#b9c0c6" /><rect x="1" y="1" width="26" height="2" fill="#c3cad0" /><path d="M1 3h24L1 14z" fill="#333" /><path d="M3 6.500h2M7 5v2.500M9 5l1.500 3M13 8h4" stroke="#eee" fill="none" /></svg></Slot>
          <Slot>
            <svg width="30" height="30" viewBox="0 0 30 30"><path d="M15 0a15 15 0 1 1-6.500 28.500L0 30l2-8A15 15 0 0 1 15 0z" fill="#fff" /><path d="M15 2.800A12.200 12.200 0 1 1 9 25.700L3.800 26.500 4.900 21.700A12.200 12.200 0 0 1 15 2.800z" fill="#3ac151" /><path d="M9.500 8.500c1.500-1.500 2.500-.5 3.500 2.200.4 1-.8 1.700-1 2.300 1.200 2.500 3 4 5.300 5 .8-.5 1.300-1.800 2.200-1.600 3 1.200 3.600 1.800 2.300 3.600-1.500 2-4.800 2-8.800-.8-3.600-2.600-6.500-7-3.500-10.700z" fill="#fff" /></svg>
            <span className="absolute top-[2px] left-[25px] flex h-[20px] w-[20px] items-center justify-center rounded-full bg-[#4cc2ff] font-['Open_Sans',sans-serif] text-[15px] leading-[20px] text-[#16232b]">7</span>
          </Slot>
          <Slot><svg width="26" height="30" viewBox="0 0 26 30"><path d="M8 0h10l3 3 3-.5 2 4-1.500 3.500L25 14l-3.500 10L13 30l-8.500-6L1 14l.500-4L0 6.500l2-4 3 .5z" fill="#fb4a1c" /><path d="M13 5l5-.5 3.500 4.500-2.500 4 .5 3-3.500 1.500 1 2.500-4 3.500-4-3.500 1-2.500-3.500-1.500.500-3-2.500-4L8 4.500z" fill="#fff" /><path d="M7.500 10l3.500 1-.5 4M18.500 10l-3.500 1 .5 4M10.500 18.500l2.500-1 2.500 1" stroke="#fb4a1c" strokeWidth="1.300" fill="none" /></svg></Slot>
          <Slot dot><svg width="30" height="30" viewBox="0 0 30 30"><defs><linearGradient id="edg" x1="0" x2="1"><stop offset="0" stopColor="#1a9bdc" /><stop offset=".6" stopColor="#35c1c9" /><stop offset="1" stopColor="#5fd84e" /></linearGradient></defs><circle cx="15" cy="15" r="15" fill="#0f6fd0" /><path d="M0 13C1 5 8 0 15 0c9 0 15 6.500 15 13 0 5-4 7.500-8 7.500-3.500 0-5-1-4-2.500 2-3 0-7.500-5-7.500C7.500 10.500 3 12 0 17z" fill="url(#edg)" /><path d="M11 13c-3 6 1 13 8 13 4 0 7-1.500 9-3-3 4.500-7.500 7-13 7C9 30 5 22 11 13z" fill="#124e97" /><path d="M13 14c-3 5 4 10.500 14 7.500l2 1.300c-5 4-17 3.500-18-4 0-2 .8-3.800 2-4.800z" fill="#0c3f80" /></svg></Slot>
          <Slot dot>
            <svg width="30" height="30" viewBox="0 0 30 30"><circle cx="15" cy="15" r="15" fill="#2da94f" /><path d="M2 7.500A15 15 0 0 1 28 7.500L15 8z" fill="#e33b2e" /><path d="M2 7.500L8.500 19 15 8z" fill="#e33b2e" /><path d="M28 7.500A15 15 0 0 1 14.500 30L21.500 18.500 21 8H15z" fill="#fcc934" /><path d="M15 7.500h13" stroke="#e33b2e" /><circle cx="15" cy="15" r="7" fill="#fff" /><circle cx="15" cy="15" r="5.500" fill="#2f7de9" /></svg>
            <svg width="21" height="21" viewBox="0 0 21 21" className="absolute top-[3px] left-[25px]"><circle cx="10.500" cy="10.500" r="10.300" fill="#a08e84" /><path d="M8 2h5v7l3 4 1 5q-6 4-13 0l1-5 3-4z" fill="#4a3228" /><circle cx="10.500" cy="5" r="2.800" fill="#c9a68e" /><path d="M10 9h1.500v5H10z" fill="#c03020" /><path d="M5 17l3-3M16 17l-3-3" stroke="#eee" strokeWidth="1.500" /></svg>
          </Slot>
          <Slot active><svg width="30" height="23" viewBox="0 0 30 23"><rect width="30" height="23" fill="#f6f6f6" /><rect width="30" height="2.500" fill="#8e959b" /><rect x="9" y="4.500" width="12" height="15.500" rx="1" fill="#1272c6" /><path d="M3 5.500h4M3 8.500h4M3 11.500h4M3 14.500h4M23 5.500h4M23 8.500h4" stroke="#9a9a9a" /></svg></Slot>
        </div>
        <div className={'ml-auto flex shrink-0 items-center pb-[2px] pr-[24px] ' + SEGOE}>
          <svg width="14" height="9" viewBox="0 0 14 9" fill="none" stroke="#fff" strokeWidth="1.700" className="mr-[23px]"><path d="M1 8l6-6 6 6" /></svg>
          <svg width="19" height="16" viewBox="0 0 19 16" fill="none" stroke="#fff" strokeWidth="1.400" className="mr-[23px]"><rect x=".8" y=".8" width="17.400" height="14.400" rx="2.500" /><path d="M1 9.500h17M9.500 9.500v5.500" /></svg>
          <div className="mr-[23px] flex w-[30px] flex-col items-center"><T w={29.5} className="leading-[20px]">ENG</T><T w={15} className="leading-[20px]">IN</T></div>
          <svg width="20" height="15" viewBox="0 0 20 15" fill="none" stroke="#fff" strokeWidth="1.500" className="mr-[10px]"><path d="M1 5.500q9-8.500 18 0M3.800 8.500q6.200-6 12.400 0M6.500 11.300q3.500-3.500 7 0" /><circle cx="10" cy="13" r="1.200" fill="#fff" /></svg>
          <svg width="20" height="15" viewBox="0 0 20 15" fill="none" stroke="#fff" strokeWidth="1.300" className="mr-[10px]"><path d="M1 5h3l4.500-4v13L4 10H1z" /><path d="M12.500 4.500l6 6M18.500 4.500l-6 6" /></svg>
          <svg width="21" height="14" viewBox="0 0 21 14" fill="none" stroke="#fff" strokeWidth="1.400" className="mr-[19px]"><rect x=".7" y="1" width="16.600" height="12" rx="3" /><rect x="3" y="3.300" width="8" height="7.400" rx="1" fill="#fff" stroke="none" /><path d="M19 5v4" strokeWidth="2" /></svg>
          <div className="flex w-[78px] flex-col items-end"><T w={36}>10:11</T><T w={78}>03-08-2023</T></div>
        </div>
      </div>
    </div>
  );
}
